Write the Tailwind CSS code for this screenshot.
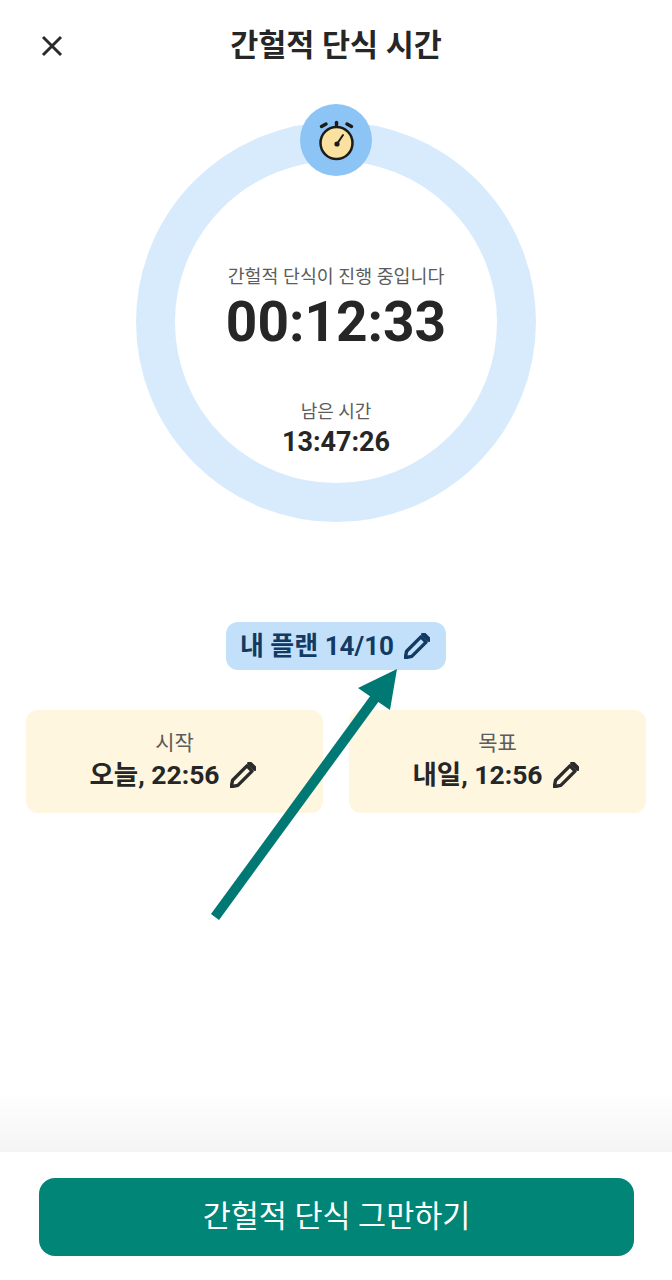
<!DOCTYPE html>
<html lang="ko">
<head>
	<meta charset="UTF-8">
	<meta name="viewport" content="width=device-width, initial-scale=1.0">
	<title>간헐적 단식 시간</title>
	<script src="https://cdn.jsdelivr.net/npm/@tailwindcss/browser@4"></script>
</head>
<body class="bg-white">
	<div class="relative w-[672px] h-[1280px] flex flex-col overflow-hidden font-['Roboto','Noto_Sans_CJK_KR',sans-serif] text-[#262626]">

		<!-- header -->
		<div class="relative h-[90px] flex items-center justify-center shrink-0">
			<svg class="absolute left-[40px] top-[34px] w-[24px] h-[24px]" viewBox="0 0 24 24" fill="none" stroke="#2b2b2b" stroke-width="3">
				<path d="M3 3 L21 21 M21 3 L3 21"/>
			</svg>
			<h1 class="text-[30.5px] font-bold leading-none mt-[2px]">간헐적 단식 시간</h1>
		</div>

		<!-- timer ring -->
		<div class="relative mt-[32px] mx-auto w-[400px] h-[400px] rounded-full border-[39px] border-[#d8ebfc] shrink-0 flex flex-col items-center">
			<div class="absolute left-[125px] top-[-57px] w-[72px] h-[72px] rounded-full bg-[#8cc4f5] flex items-center justify-center">
				<svg class="w-[44px] h-[44px]" viewBox="0 0 44 44" fill="none" stroke="#1c1c1c" stroke-linecap="round">
					<circle cx="22.5" cy="25" r="16" fill="#fae19f" stroke-width="2.5"/>
					<path d="M22.5 4.5 V7" stroke-width="3.5"/>
					<path d="M7.5 8.5 L12 6 M33 6 L37.5 8.5" stroke-width="3.5"/>
					<circle cx="23" cy="26" r="2.6" fill="#1c1c1c" stroke="none"/>
					<path d="M23 26 L29 17" stroke-width="2"/>
				</svg>
			</div>
			<p class="mt-[103px] text-[18.4px] leading-[26px] text-[#5c5c5c]">간헐적 단식이 진행 중입니다</p>
			<p class="mt-[2px] text-[55px] leading-[60px] font-bold">00:12:33</p>
			<p class="mt-[47px] text-[18px] leading-[26px] text-[#5c5c5c]">남은 시간</p>
			<p class="mt-[1px] text-[27px] leading-[32px] font-bold">13:47:26</p>
		</div>

		<!-- plan pill -->
		<div class="mt-[100px] mx-auto w-[220px] h-[48px] pr-[2px] rounded-[12px] bg-[#c3e0fa] flex items-center justify-center gap-[10px] text-[#123a62] shrink-0">
			<span class="text-[26px] font-bold leading-none">내 플랜 14/10</span>
			<svg class="w-[26px] h-[26px]" viewBox="2 2 20 20" fill="none" stroke="currentColor" stroke-width="2.6" stroke-linejoin="round">
				<path d="M3 21 L4 16 L15 5 L19 9 L8 20 Z"/>
				<path d="M17 3 L21 7" stroke-width="3.5" stroke-linecap="round"/>
			</svg>
		</div>

		<!-- start / goal -->
		<div class="mt-[40px] px-[26px] grid grid-cols-2 gap-[26px] shrink-0">
			<div class="h-[103px] rounded-[12px] bg-[#fff6e0] flex flex-col items-center pt-[19px]">
				<span class="text-[21px] leading-[28px] text-[#5c5c5c]">시작</span>
				<div class="mt-[1px] pr-[4px] flex items-center gap-[10px]">
					<span class="text-[26.5px] leading-[34px] font-bold">오늘, 22:56</span>
					<svg class="w-[26px] h-[26px]" viewBox="2 2 20 20" fill="none" stroke="#2b2b2b" stroke-width="2.6" stroke-linejoin="round">
						<path d="M3 21 L4 16 L15 5 L19 9 L8 20 Z"/>
						<path d="M17 3 L21 7" stroke-width="3.5" stroke-linecap="round"/>
					</svg>
				</div>
			</div>
			<div class="h-[103px] rounded-[12px] bg-[#fff6e0] flex flex-col items-center pt-[19px]">
				<span class="text-[21px] leading-[28px] text-[#5c5c5c]">목표</span>
				<div class="mt-[1px] pr-[4px] flex items-center gap-[10px]">
					<span class="text-[26.5px] leading-[34px] font-bold">내일, 12:56</span>
					<svg class="w-[26px] h-[26px]" viewBox="2 2 20 20" fill="none" stroke="#2b2b2b" stroke-width="2.6" stroke-linejoin="round">
						<path d="M3 21 L4 16 L15 5 L19 9 L8 20 Z"/>
						<path d="M17 3 L21 7" stroke-width="3.5" stroke-linecap="round"/>
					</svg>
				</div>
			</div>
		</div>

		<!-- footer -->
		<div class="mt-auto h-[60px] shrink-0 bg-gradient-to-b from-white to-[#f4f4f4]"></div>
		<div class="h-[128px] shrink-0 px-[39px] pt-[26px] bg-white">
			<button class="w-[595px] h-[78px] rounded-[16px] bg-[#008577] text-white text-[30.5px] font-normal leading-none">간헐적 단식 그만하기</button>
		</div>

		<!-- annotation arrow -->
		<svg class="absolute left-0 top-0 w-[672px] h-[1280px] pointer-events-none" viewBox="0 0 672 1280">
			<path d="M215 917 L375 698" stroke="#007873" stroke-width="10" fill="none"/>
			<path d="M397 669 L390 710 L358 688 Z" fill="#007873"/>
		</svg>
	</div>
</body>
</html>
